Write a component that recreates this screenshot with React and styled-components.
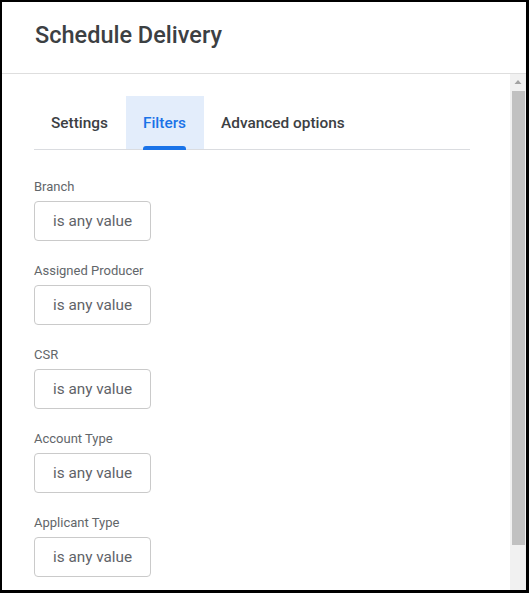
import { useState } from "react";
import styled, { createGlobalStyle } from "styled-components";

const GlobalStyle = createGlobalStyle`
  * { box-sizing: border-box; }
  html, body { margin: 0; padding: 0; background: #ffffff; }
  body { font-family: Roboto, "Noto Sans", "Liberation Sans", sans-serif; }
`;

const tabs = ["Settings", "Filters", "Advanced options"];
const filters = ["Branch", "Assigned Producer", "CSR", "Account Type", "Applicant Type"];

export default function App() {
  const [active, setActive] = useState("Filters");

  return (
    <Window>
      <GlobalStyle />
      <Header>
        <Title>Schedule Delivery</Title>
      </Header>
      <Main>
        <Body>
          <TabBar>
            {tabs.map((t) => (
              <Tab key={t} $active={t === active} onClick={() => setActive(t)}>
                {t}
              </Tab>
            ))}
          </TabBar>
          <Fields>
            {filters.map((f) => (
              <Field key={f}>
                <Label>{f}</Label>
                <ValueBox>is any value</ValueBox>
              </Field>
            ))}
          </Fields>
        </Body>
        <ScrollBar>
          <ScrollButton>
            <svg width="16" height="16" viewBox="0 0 16 16">
              <path d="M4.5 10 L8 6 L11.5 10 Z" fill="#a3a3a3" />
            </svg>
          </ScrollButton>
          <Thumb />
        </ScrollBar>
      </Main>
    </Window>
  );
}

const Window = styled.div`
  width: 529px;
  height: 593px;
  border-style: solid;
  border-color: #000000;
  border-width: 2px 3px 3px 2px;
  background: #ffffff;
  display: flex;
  flex-direction: column;
  overflow: hidden;
`;

const Header = styled.div`
  flex: 0 0 72px;
  padding: 19px 0 0 33px;
  border-bottom: 1px solid #dedede;
`;

const Title = styled.h1`
  margin: 0;
  font-size: 23.5px;
  line-height: 28px;
  font-weight: 500;
  color: #3c4043;
`;

const Main = styled.div`
  flex: 1;
  display: flex;
  min-height: 0;
`;

const Body = styled.div`
  flex: 1;
  overflow: hidden;
  padding: 22px 40px 0 32px;
`;

const ScrollBar = styled.div`
  flex: 0 0 16px;
  display: flex;
  flex-direction: column;
  background: #f1f1f1;
`;

const ScrollButton = styled.div`
  height: 16px;
  display: flex;
  align-items: center;
  justify-content: center;
`;

const Thumb = styled.div`
  height: 454px;
  margin: 1px 1px 0 2px;
  background: #c1c1c1;
`;

const TabBar = styled.div`
  display: flex;
  height: 54px;
  border-bottom: 1px solid #dadce0;
`;

const Tab = styled.div`
  position: relative;
  display: flex;
  align-items: center;
  padding: 0 18px 0 17px;
  font-size: 15.4px;
  font-weight: 500;
  cursor: pointer;
  color: ${(p) => (p.$active ? "#1a73e8" : "#3c4043")};
  background: ${(p) => (p.$active ? "#e3edfb" : "transparent")};

  &::after {
    content: "";
    display: ${(p) => (p.$active ? "block" : "none")};
    position: absolute;
    left: 17px;
    right: 18px;
    bottom: -1px;
    height: 4px;
    border-radius: 3px 3px 0 0;
    background: #1a73e8;
  }
`;

const Fields = styled.div`
  display: flex;
  flex-direction: column;
  gap: 22px;
  margin-top: 29px;
`;

const Field = styled.div`
  display: flex;
  flex-direction: column;
  align-items: flex-start;
  gap: 6px;
`;

const Label = styled.div`
  font-size: 13px;
  line-height: 16px;
  color: #62666a;
`;

const ValueBox = styled.div`
  height: 40px;
  display: flex;
  align-items: center;
  padding: 0 18px;
  border: 1px solid #cacaca;
  border-radius: 4px;
  font-size: 15.3px;
  color: #5f6368;
`;
